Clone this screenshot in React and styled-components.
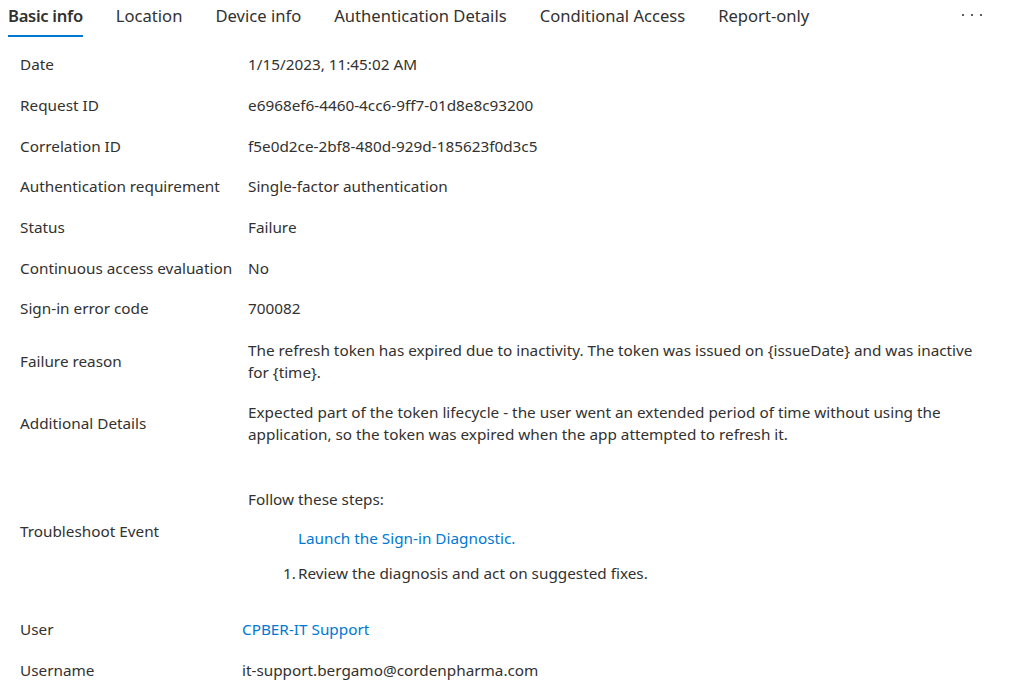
import React from "react"
import styled, { createGlobalStyle } from "styled-components"

const GlobalStyle = createGlobalStyle`
  html, body {
    margin: 0;
    padding: 0;
    background: #ffffff;
  }
  body {
    font-family: "Noto Sans", "Open Sans", "Liberation Sans", sans-serif;
    color: #323130;
  }
`

const Page = styled.div`
  width: 1013px;
  height: 697px;
  overflow: hidden;
  box-sizing: border-box;
  padding: 0 31px 0 0;
`

const TabBar = styled.nav`
  display: flex;
  align-items: flex-start;
  height: 44px;
  padding-left: 8px;
  gap: 33px;
`

const Tab = styled.div`
  height: 37px;
  box-sizing: border-box;
  padding-top: 4px;
  font-size: 16.6px;
  line-height: 24px;
  font-weight: ${p => (p.$active ? 600 : 400)};
  letter-spacing: ${p => (p.$active ? "-0.3px" : "0")};
  color: #323130;
  white-space: nowrap;
  cursor: pointer;
  border-bottom: 2px solid ${p => (p.$active ? "#0078d4" : "transparent")};
`

const More = styled.div`
  margin-left: auto;
  margin-top: 14px;
  display: flex;
  gap: 7px;

  span {
    width: 2px;
    height: 2px;
    background: #605e5c;
  }
`

const Table = styled.div`
  display: flex;
  flex-direction: column;
`

const Row = styled.div`
  display: grid;
  grid-template-columns: ${p => p.$label || 228}px 1fr;
  align-items: center;
  padding: ${p => p.$pad || "10.33px 0"};
  padding-left: 20px;
  font-size: 15.3px;
  line-height: 20px;
`

const Label = styled.div`
  white-space: nowrap;
`

const Value = styled.div`
  line-height: ${p => (p.$multi ? "22px" : "20px")};
`

const A = styled.a`
  color: #0078d4;
  text-decoration: none;
  cursor: pointer;
`

const Steps = styled.div`
  padding-top: 10px;
`

const StepList = styled.ol`
  margin: 19px 0 0;
  padding: 0 0 0 50px;
  list-style: none;
`

const Step = styled.li`
  margin-top: ${p => (p.$first ? 0 : 15)}px;
  position: relative;

  &::before {
    content: ${p => (p.$num ? `"${p.$num}."` : "none")};
    position: absolute;
    left: -15px;
  }
`

const rows = [
  ["Date", "1/15/2023, 11:45:02 AM"],
  ["Request ID", "e6968ef6-4460-4cc6-9ff7-01d8e8c93200"],
  ["Correlation ID", "f5e0d2ce-2bf8-480d-929d-185623f0d3c5"],
  ["Authentication requirement", "Single-factor authentication"],
  ["Status", "Failure"],
  ["Continuous access evaluation", "No"],
  ["Sign-in error code", "700082"],
]

const tabs = [
  "Basic info",
  "Location",
  "Device info",
  "Authentication Details",
  "Conditional Access",
  "Report-only",
]

export default function App() {
  return (
    <Page>
      <GlobalStyle />
      <TabBar>
        {tabs.map((t, i) => (
          <Tab key={t} $active={i === 0}>
            {t}
          </Tab>
        ))}
        <More>
          <span />
          <span />
          <span />
        </More>
      </TabBar>
      <Table>
        {rows.map(([k, v]) => (
          <Row key={k}>
            <Label>{k}</Label>
            <Value>{v}</Value>
          </Row>
        ))}
        <Row $pad="10.67px 0 9px">
          <Label>Failure reason</Label>
          <Value $multi>
            The refresh token has expired due to inactivity. The token was
            issued on {"{issueDate}"} and was inactive for {"{time}"}.
          </Value>
        </Row>
        <Row $pad="9px 0 10.67px">
          <Label>Additional Details</Label>
          <Value $multi>
            Expected part of the token lifecycle - the user went an extended
            period of time without using the application, so the token was
            expired when the app attempted to refresh it.
          </Value>
        </Row>
        <Row $pad="23.33px 0 25.67px">
          <Label>Troubleshoot Event</Label>
          <Steps>
            <div>Follow these steps:</div>
            <StepList>
              <Step $first>
                <A>Launch the Sign-in Diagnostic.</A>
              </Step>
              <Step $num="1">Review the diagnosis and act on suggested fixes.</Step>
            </StepList>
          </Steps>
        </Row>
        <Row $label={222}>
          <Label>User</Label>
          <Value>
            <A>CPBER-IT Support</A>
          </Value>
        </Row>
        <Row $label={222}>
          <Label>Username</Label>
          <Value>it-support.bergamo@cordenpharma.com</Value>
        </Row>
      </Table>
    </Page>
  )
}
